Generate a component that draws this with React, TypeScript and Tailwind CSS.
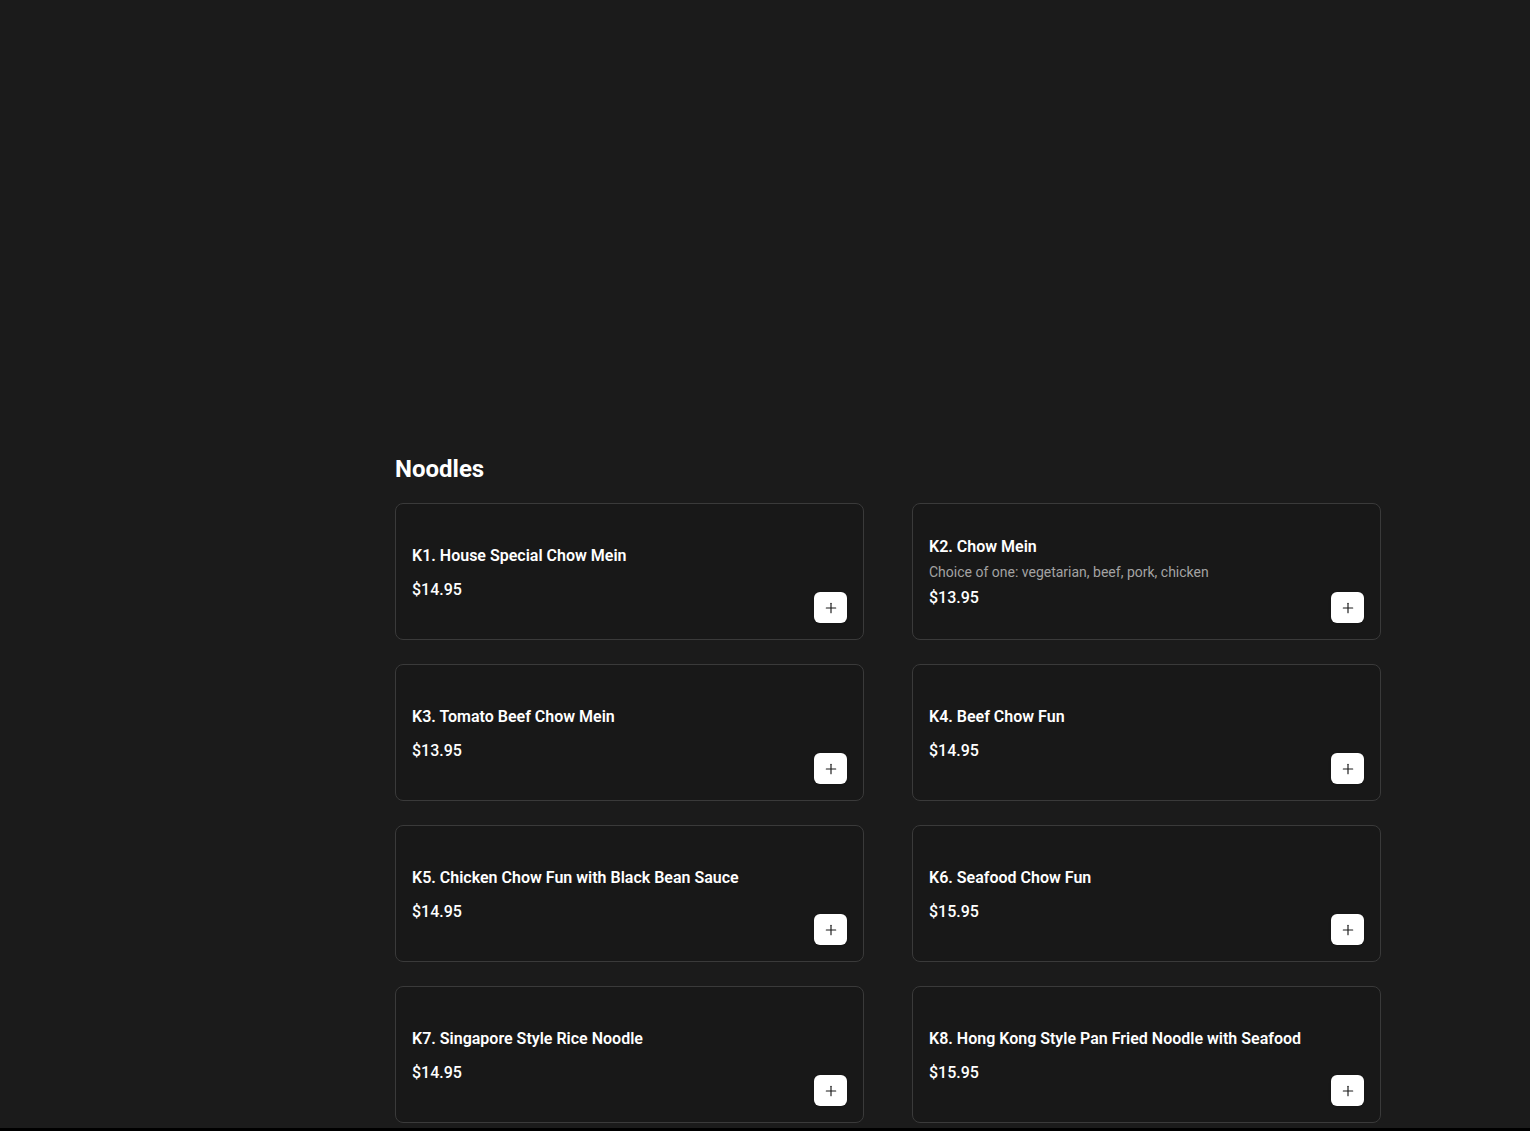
import React from 'react';
import { Plus } from 'lucide-react';

interface MenuItem {
  code: string;
  name: string;
  description?: string;
  price: string;
}

const noodles: MenuItem[] = [
  { code: 'K1', name: 'House Special Chow Mein', price: '$14.95' },
  { code: 'K2', name: 'Chow Mein', description: 'Choice of one: vegetarian, beef, pork, chicken', price: '$13.95' },
  { code: 'K3', name: 'Tomato Beef Chow Mein', price: '$13.95' },
  { code: 'K4', name: 'Beef Chow Fun', price: '$14.95' },
  { code: 'K5', name: 'Chicken Chow Fun with Black Bean Sauce', price: '$14.95' },
  { code: 'K6', name: 'Seafood Chow Fun', price: '$15.95' },
  { code: 'K7', name: 'Singapore Style Rice Noodle', price: '$14.95' },
  { code: 'K8', name: 'Hong Kong Style Pan Fried Noodle with Seafood', price: '$15.95' },
];

function MenuCard({ item }: { item: MenuItem }) {
  return (
    <div className="h-[137px] flex items-center justify-between p-4 rounded-lg border border-[#3a3a3a] bg-[#181818]">
      <div className="flex flex-col pt-[2px]">
        <p className="text-base leading-6 font-semibold text-white">
          {item.code}. {item.name}
        </p>
        {item.description && (
          <p className="mt-[3px] text-sm leading-5 text-[#a3a3a3]">{item.description}</p>
        )}
        <p className={`${item.description ? 'mt-1' : 'mt-[10px]'} text-base leading-6 font-medium text-white`}>
          {item.price}
        </p>
      </div>
      <button className="self-end w-[33px] h-[31px] flex items-center justify-center rounded-md bg-white text-[#1a1a1a] shadow-sm">
        <Plus size={16} strokeWidth={1.75} />
      </button>
    </div>
  );
}

export default function App() {
  return (
    <div className="min-h-[1131px] bg-[#1b1b1b] font-['Roboto',sans-serif]">
      <div className="h-[453px]" />
      <section className="ml-[395px] w-[986px]">
        <h2 className="text-2xl leading-8 font-bold text-white mb-[18px]">Noodles</h2>
        <div className="grid grid-cols-2 gap-x-12 gap-y-6">
          {noodles.map(item => (
            <MenuCard key={item.code} item={item} />
          ))}
        </div>
      </section>
      <div className="mt-[5px] h-[4px] bg-black" />
    </div>
  );
}
